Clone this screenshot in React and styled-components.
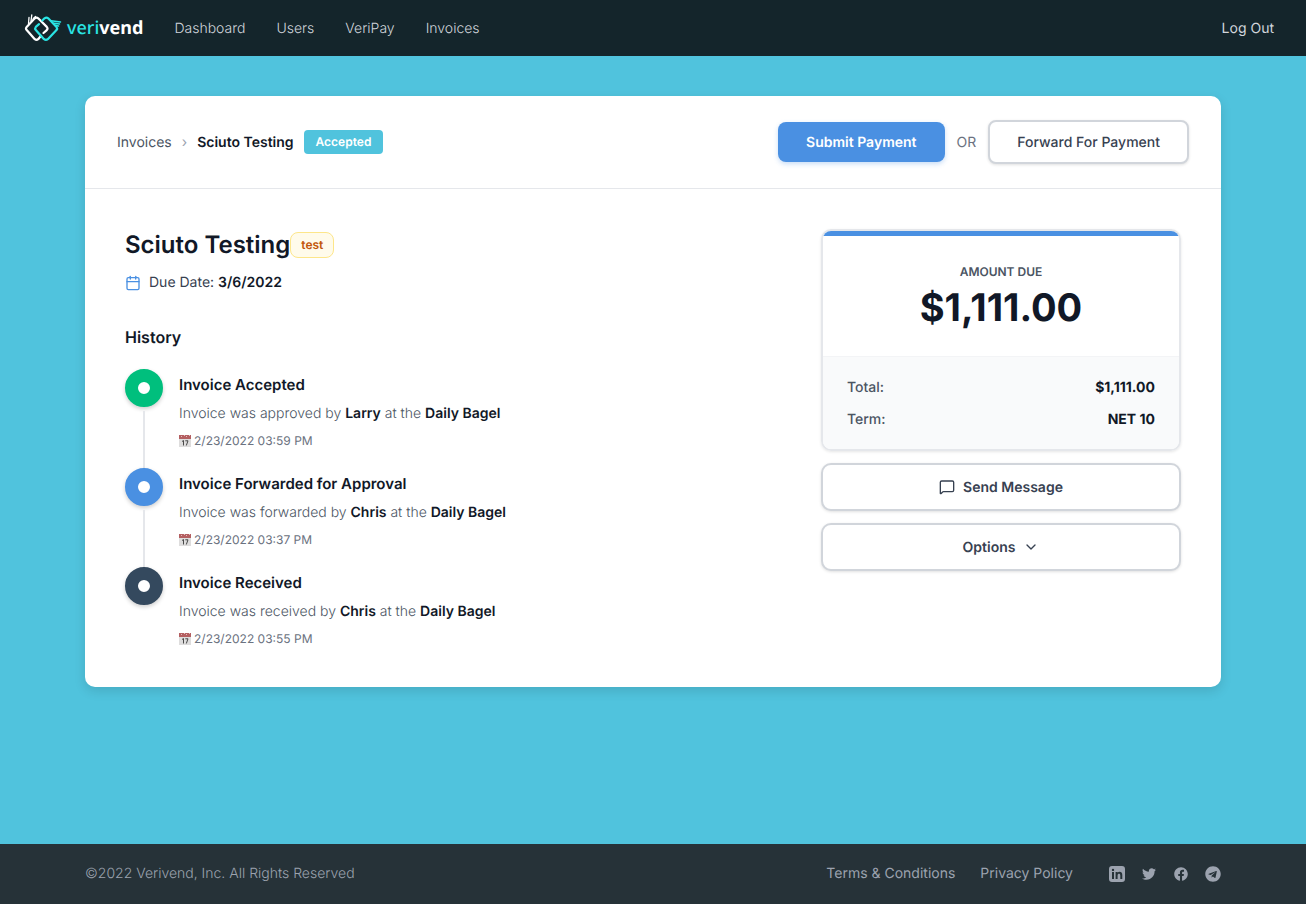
import React from "react";
import styled, { createGlobalStyle } from "styled-components";
import { Calendar, ChevronDown, MessageSquare } from "lucide-react";
import { FaFacebook, FaTelegram, FaTwitter } from "react-icons/fa";

const events = [
  {
    title: "Invoice Accepted",
    action: "approved",
    person: "Larry",
    date: "2/23/2022 03:59 PM",
    color: "#00bf7d",
  },
  {
    title: "Invoice Forwarded for Approval",
    action: "forwarded",
    person: "Chris",
    date: "2/23/2022 03:37 PM",
    color: "#4a90e2",
  },
  {
    title: "Invoice Received",
    action: "received",
    person: "Chris",
    date: "2/23/2022 03:55 PM",
    color: "#34495e",
  },
];

const LogoMark = () => (
  <svg width="38" height="28" viewBox="0 0 38 28" fill="none" aria-hidden="true">
    <g strokeWidth="2.200" strokeLinejoin="round" strokeLinecap="round">
      <path
        d="M17 21.800 14.200 25.200Q12.500 26.600 10.800 25.200L2.700 16.100Q1.300 14.500 2.700 12.900L10.800 4.300Q12.500 2.900 14.200 4.300L22.800 12.900Q24.200 14.500 22.800 16.100L19.500 19"
        stroke="#fff"
      />
      <path d="M4.500 9.500 5 3.500M7 7 7.800 0.800M9.300 4.500 11.500 2.500" stroke="#fff" strokeWidth="1.300" />
      <path
        d="M15 10.200 11.800 12.900Q10.500 14.500 11.800 16.100L20 25.200Q22 26.600 23.800 25.200L32.500 16.100Q33.700 14.500 32.500 12.900L24.200 4.300Q22.500 2.900 20.500 4.300L18.300 6.500"
        stroke="#2ae4e4"
      />
      <path d="M27 6.800 36.500 8M30 9.300 35.500 10M32 11.500 34.500 12" stroke="#2ae4e4" strokeWidth="1.500" />
    </g>
  </svg>
);

const LinkedinIcon = () => (
  <svg width="16" height="16" viewBox="0 0 16 16" fill="currentColor" aria-hidden="true">
    <path
      fillRule="evenodd"
      d="M3 0h10a3 3 0 0 1 3 3v10a3 3 0 0 1-3 3H3a3 3 0 0 1-3-3V3a3 3 0 0 1 3-3ZM3 6v7h2V6H3Zm1-3.300a1.200 1.200 0 1 0 0 2.400 1.200 1.200 0 0 0 0-2.400ZM6.600 6v7h2V9.400c0-1 .5-1.700 1.400-1.700s1.300.7 1.300 1.700V13h2V8.900c0-2-1.100-3.100-2.700-3.100-.9 0-1.600.4-2 1V6h-2Z"
    />
  </svg>
);

const DateIcon = () => (
  <svg width="12" height="12" viewBox="0 0 12 12" aria-hidden="true">
    <path d="M0 3h12v9H0z" fill="#dedddd" />
    <path d="M0 0h12v4H0z" fill="#b45f61" />
    <path d="M2 1h1v1H2zM5 0h1v1H5zM7 1h1v1H7zM10 0h1v1h-1z" fill="#e5bfc0" />
    <path d="M3 6.500 4.500 5.500V10.500M6.300 5.800H9L7.300 10.500" fill="none" stroke="#494949" />
  </svg>
);

const App = () => {
  return (
    <Page>
      <GlobalStyle />
      <NavBar>
        <Brand href="#" aria-label="verivend">
          <LogoMark />
          <BrandName>
            veri<b>vend</b>
          </BrandName>
        </Brand>
        <NavLinks>
          <NavLink href="#">Dashboard</NavLink>
          <NavLink href="#">Users</NavLink>
          <NavLink href="#">VeriPay</NavLink>
          <NavLink href="#">Invoices</NavLink>
        </NavLinks>
        <LogOut href="#">Log Out</LogOut>
      </NavBar>
      <Main>
        <Card>
          <CardHeader>
            <Breadcrumb aria-label="Breadcrumb">
              <a href="#">Invoices</a>
              <Separator>›</Separator>
              <strong>Sciuto Testing</strong>
              <Status>Accepted</Status>
            </Breadcrumb>
            <Actions>
              <Button $primary>Submit Payment</Button>
              <span>OR</span>
              <Button>Forward For Payment</Button>
            </Actions>
          </CardHeader>
          <CardBody>
            <Details>
              <TitleRow>
                <h1>Sciuto Testing</h1>
                <Tag>test</Tag>
              </TitleRow>
              <DueDate>
                <Calendar size={16} strokeWidth={2} color="#4a90e2" />
                <span>
                  Due Date: <strong>3/6/2022</strong>
                </span>
              </DueDate>
              <HistoryTitle>History</HistoryTitle>
              <Timeline>
                {events.map((event) => (
                  <Event key={event.title}>
                    <Rail>
                      <Dot $color={event.color} />
                    </Rail>
                    <EventText>
                      <h3>{event.title}</h3>
                      <p>
                        Invoice was {event.action} by <strong>{event.person}</strong> at the{" "}
                        <strong>Daily Bagel</strong>
                      </p>
                      <EventDate>
                        <DateIcon />
                        {event.date}
                      </EventDate>
                    </EventText>
                  </Event>
                ))}
              </Timeline>
            </Details>
            <Sidebar>
              <AmountPanel>
                <AmountDue>
                  <h2>AMOUNT DUE</h2>
                  <p>$1,111.00</p>
                </AmountDue>
                <Summary>
                  <div>
                    <dt>Total:</dt>
                    <dd>$1,111.00</dd>
                  </div>
                  <div>
                    <dt>Term:</dt>
                    <dd>NET 10</dd>
                  </div>
                </Summary>
              </AmountPanel>
              <Button $block>
                <MessageSquare size={16} strokeWidth={2} />
                Send Message
              </Button>
              <Button $block>
                Options
                <ChevronDown size={16} strokeWidth={2} />
              </Button>
            </Sidebar>
          </CardBody>
        </Card>
      </Main>
      <Footer>
        <FooterInner>
          <p>©2022 Verivend, Inc. All Rights Reserved</p>
          <FooterLinks>
            <a href="#">Terms &amp; Conditions</a>
            <a href="#">Privacy Policy</a>
          </FooterLinks>
          <Social>
            <a href="#" aria-label="LinkedIn">
              <LinkedinIcon />
            </a>
            <a href="#" aria-label="Twitter">
              <FaTwitter size={14} />
            </a>
            <a href="#" aria-label="Facebook">
              <FaFacebook size={14} />
            </a>
            <a href="#" aria-label="Telegram">
              <FaTelegram size={16} />
            </a>
          </Social>
        </FooterInner>
      </Footer>
    </Page>
  );
};

//styled components
const GlobalStyle = createGlobalStyle`
  * {
    box-sizing: border-box;
    margin: 0;
    padding: 0;
  }
  body {
    font-family: Inter, "Liberation Sans", sans-serif;
    font-size: 14px;
    line-height: 21px;
    color: #111827;
    text-rendering: geometricPrecision;
    -webkit-font-smoothing: antialiased;
  }
  a {
    color: inherit;
    text-decoration: none;
  }
  strong {
    font-weight: 600;
    color: #111827;
  }
`;
const Page = styled.div`
  min-height: 100vh;
  display: flex;
  flex-direction: column;
  background: #50c3dd;
`;
const NavBar = styled.nav`
  display: flex;
  align-items: center;
  height: 56px;
  padding: 0 32px 0 24px;
  background: #14252b;
`;
const Brand = styled.a`
  display: flex;
  align-items: center;
  gap: 5px;
`;
const BrandName = styled.span`
  font-family: "Noto Sans", sans-serif;
  font-size: 18px;
  font-weight: 500;
  color: #2ae4e4;
  & b {
    font-weight: 700;
    color: #fff;
  }
`;
const NavLinks = styled.div`
  display: flex;
  flex: 1;
  gap: 31px;
  margin-left: 31px;
`;
const NavLink = styled.a`
  color: #d1d5db;
  font-weight: 300;
`;
const LogOut = styled(NavLink)`
  font-weight: 400;
`;
const Main = styled.main`
  flex: 1;
  padding: 40px 85px;
`;
const Card = styled.section`
  max-width: 1136px;
  margin: 0 auto;
  background: #fff;
  border-radius: 10px;
  box-shadow: 0 4px 12px rgba(0, 0, 0, 0.12);
`;
const CardHeader = styled.header`
  display: flex;
  align-items: center;
  justify-content: space-between;
  padding: 24px 32px;
  border-bottom: 1px solid #e5e7eb;
`;
const Breadcrumb = styled.nav`
  display: flex;
  align-items: center;
  color: #4b5563;
`;
const Separator = styled.span`
  margin: 0 10px;
  color: #9ca3af;
`;
const Status = styled.span`
  margin-left: 10px;
  padding: 2px 12px;
  border-radius: 4px;
  background: #50c3dd;
  color: #fff;
  font-size: 12px;
  line-height: 20px;
  font-weight: 600;
`;
const Actions = styled.div`
  display: flex;
  align-items: center;
  gap: 12px;
  color: #6b7280;
`;
const Button = styled.button`
  display: flex;
  align-items: center;
  justify-content: center;
  gap: 8px;
  height: ${(props) => (props.$primary ? "40px" : props.$block ? "48px" : "44px")};
  padding: 0 ${(props) => (props.$primary ? "28px" : "27px")};
  border: ${(props) => (props.$primary ? "0" : "2px solid #d1d5db")};
  border-radius: ${(props) => (props.$block ? "10px" : "8px")};
  background: ${(props) => (props.$primary ? "#4a90e2" : "#fff")};
  color: ${(props) => (props.$primary ? "#fff" : "#374151")};
  box-shadow: ${(props) =>
    props.$primary ? "0 2px 5px rgba(74, 144, 226, 0.3)" : "0 1px 3px rgba(0, 0, 0, 0.12)"};
  font: inherit;
  font-weight: ${(props) => (props.$primary || props.$block ? 600 : 500)};
  text-rendering: inherit;
`;
const CardBody = styled.div`
  display: flex;
  justify-content: space-between;
  gap: 40px;
  padding: 40px;
`;
const Details = styled.div`
  flex: 1;
`;
const TitleRow = styled.div`
  display: flex;
  align-items: center;
  & h1 {
    font-size: 24px;
    line-height: 32px;
    font-weight: 600;
  }
`;
const Tag = styled.span`
  padding: 2px 10px;
  border: 1px solid #fde68a;
  border-radius: 8px;
  background: #fffbeb;
  color: #c2570c;
  font-size: 12px;
  line-height: 20px;
  font-weight: 600;
`;
const DueDate = styled.p`
  display: flex;
  align-items: center;
  gap: 8px;
  margin-top: 11px;
  line-height: 22px;
  color: #374151;
`;
const HistoryTitle = styled.h2`
  margin: 31px 0 20px;
  font-size: 16px;
  line-height: 24px;
  font-weight: 600;
`;
const Timeline = styled.ol`
  list-style: none;
`;
const Rail = styled.div`
  display: flex;
  flex-direction: column;
  align-items: center;
  width: 38px;
  &::after {
    content: "";
    flex: 1;
    width: 2px;
    margin-top: 4px;
    background: #e5e7eb;
  }
`;
const EventText = styled.div`
  padding: 4px 0 19px;
  & h3 {
    font-size: 15px;
    line-height: 24px;
    font-weight: 600;
  }
  & p {
    margin-top: 6px;
    color: #4b5563;
    font-weight: 300;
  }
`;
const Event = styled.li`
  display: flex;
  gap: 16px;
  &:last-child ${Rail}::after {
    display: none;
  }
  &:last-child ${EventText} {
    padding-bottom: 0;
  }
`;
const Dot = styled.span`
  width: 38px;
  height: 38px;
  border: 13px solid ${(props) => props.$color};
  border-radius: 50%;
  background: #fff;
  box-shadow: 0 2px 4px rgba(0, 0, 0, 0.2);
`;
const EventDate = styled.time`
  display: flex;
  align-items: center;
  gap: 3px;
  margin-top: 9px;
  font-size: 12px;
  line-height: 16px;
  color: #6b7280;
`;
const Sidebar = styled.aside`
  display: flex;
  flex-direction: column;
  gap: 12px;
  width: 360px;
`;
const AmountPanel = styled.section`
  overflow: hidden;
  border: 2px solid #e5e7eb;
  border-radius: 10px;
  box-shadow: 0 1px 3px rgba(0, 0, 0, 0.1);
`;
const AmountDue = styled.div`
  padding: 26px 24px;
  border-top: 5px solid #4a90e2;
  text-align: center;
  & h2 {
    font-size: 12px;
    line-height: 20px;
    font-weight: 600;
    color: #4b5563;
  }
  & p {
    margin-top: 4px;
    font-size: 38px;
    line-height: 44px;
    font-weight: 700;
  }
`;
const Summary = styled.dl`
  display: flex;
  flex-direction: column;
  gap: 11px;
  padding: 20px 24px 19px;
  border-top: 1px solid #f3f4f6;
  background: #f9fafb;
  & div {
    display: flex;
    justify-content: space-between;
  }
  & dt {
    font-weight: 500;
    color: #4b5563;
  }
  & dd {
    font-weight: 700;
  }
`;
const Footer = styled.footer`
  padding: 19px 85px;
  background: #263238;
  color: #9ca3af;
`;
const FooterInner = styled.div`
  display: flex;
  align-items: center;
  max-width: 1136px;
  margin: 0 auto;
  line-height: 22px;
  & p {
    font-weight: 300;
  }
`;
const FooterLinks = styled.div`
  display: flex;
  gap: 25px;
  margin-left: auto;
`;
const Social = styled.div`
  display: flex;
  gap: 16px;
  margin-left: 36px;
  & a {
    display: flex;
    align-items: center;
    justify-content: center;
    width: 16px;
    height: 16px;
  }
`;

export default App;
